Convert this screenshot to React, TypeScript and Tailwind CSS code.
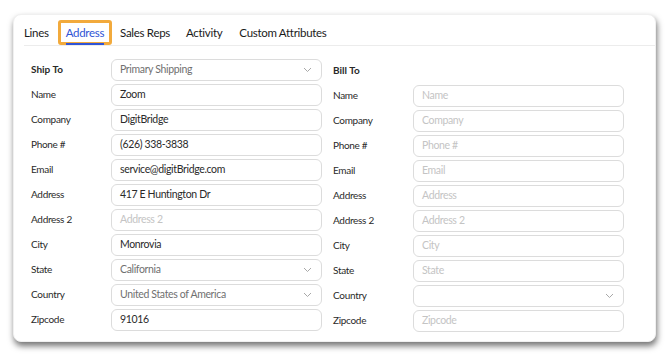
import React from "react";

const font = { fontFamily: 'Lato, "Open Sans", sans-serif' };

type Field = { label: string; value?: string; placeholder?: string; select?: boolean; muted?: boolean };

const shipTo: Field[] = [
  { label: "Name", value: "Zoom" },
  { label: "Company", value: "DigitBridge" },
  { label: "Phone #", value: "(626) 338-3838" },
  { label: "Email", value: "service@digitBridge.com" },
  { label: "Address", value: "417 E Huntington Dr" },
  { label: "Address 2", placeholder: "Address 2" },
  { label: "City", value: "Monrovia" },
  { label: "State", value: "California", select: true, muted: true },
  { label: "Country", value: "United States of America", select: true, muted: true },
  { label: "Zipcode", value: "91016" },
];

const billTo: Field[] = [
  { label: "Name", placeholder: "Name" },
  { label: "Company", placeholder: "Company" },
  { label: "Phone #", placeholder: "Phone #" },
  { label: "Email", placeholder: "Email" },
  { label: "Address", placeholder: "Address" },
  { label: "Address 2", placeholder: "Address 2" },
  { label: "City", placeholder: "City" },
  { label: "State", placeholder: "State" },
  { label: "Country", select: true },
  { label: "Zipcode", placeholder: "Zipcode" },
];

function Chevron() {
  return (
    <svg width="9" height="6" viewBox="0 0 9 6" className="shrink-0">
      <path d="M1 1l3.5 3.5L8 1" fill="none" stroke="#a8a8a8" strokeWidth="1" />
    </svg>
  );
}

function Box({ f }: { f: Field }) {
  return (
    <div className="flex h-[22px] w-[211px] items-center justify-between rounded-[6px] border border-[#dcdcdc] bg-white pl-[8px] pr-[9px] text-[10.5px] tracking-[-0.35px]">
      {f.value ? (
        <span className={f.muted ? "text-[#707070]" : "text-[#2a2a2a]"}>{f.value}</span>
      ) : (
        <span className="text-[#c4c4c4]">{f.placeholder ?? ""}</span>
      )}
      {f.select && <Chevron />}
    </div>
  );
}

function Row({ f }: { f: Field }) {
  return (
    <div className="flex h-[25px] items-center">
      <div className="w-[80px] text-[10px] tracking-[-0.3px] text-[#2a2a2a]">{f.label}</div>
      <Box f={f} />
    </div>
  );
}

export default function App() {
  return (
    <div className="h-[356px] w-[670px] bg-white pl-[13px] pt-[14px]" style={font}>
      <div className="h-[328px] w-[643px] rounded-[8px] border border-[#f0f0f0] bg-white shadow-[1px_4px_6px_rgba(0,0,0,0.55)]">
        <div className="ml-[10px] flex h-[31px] items-end border-b border-[#ececec] text-[11.5px] tracking-[-0.3px] text-[#1a1a1a]">
          <div className="mr-[9px] flex h-[25px] items-center pt-[1px]">Lines</div>
          <div className="relative mr-[8px] flex h-[25px] items-center rounded-[3px] border-[3px] border-[#f2aa3c] px-[5px] pt-[1px] text-[#2f54d6]">
            Address
            <div className="absolute bottom-[-3px] left-[5px] right-[5px] h-[2px] bg-[#2f54d6]" />
          </div>
          <div className="mr-[16px] flex h-[25px] items-center pt-[1px]">Sales Reps</div>
          <div className="mr-[17px] flex h-[25px] items-center pt-[1px]">Activity</div>
          <div className="flex h-[25px] items-center pt-[1px]">Custom Attributes</div>
        </div>
        <div className="flex gap-[11px] pl-[17px] pt-[11px]">
          <div className="flex flex-col">
            <div className="flex h-[25px] items-center">
              <div className="w-[80px] text-[10px] font-bold text-[#2a2a2a]">Ship To</div>
              <Box f={{ label: "", value: "Primary Shipping", select: true, muted: true }} />
            </div>
            {shipTo.map((f) => (
              <Row key={f.label} f={f} />
            ))}
          </div>
          <div className="flex flex-col pt-[1px]">
            <div className="flex h-[25px] items-center">
              <div className="w-[80px] text-[10px] font-bold text-[#2a2a2a]">Bill To</div>
            </div>
            {billTo.map((f) => (
              <Row key={f.label} f={f} />
            ))}
          </div>
        </div>
      </div>
    </div>
  );
}
